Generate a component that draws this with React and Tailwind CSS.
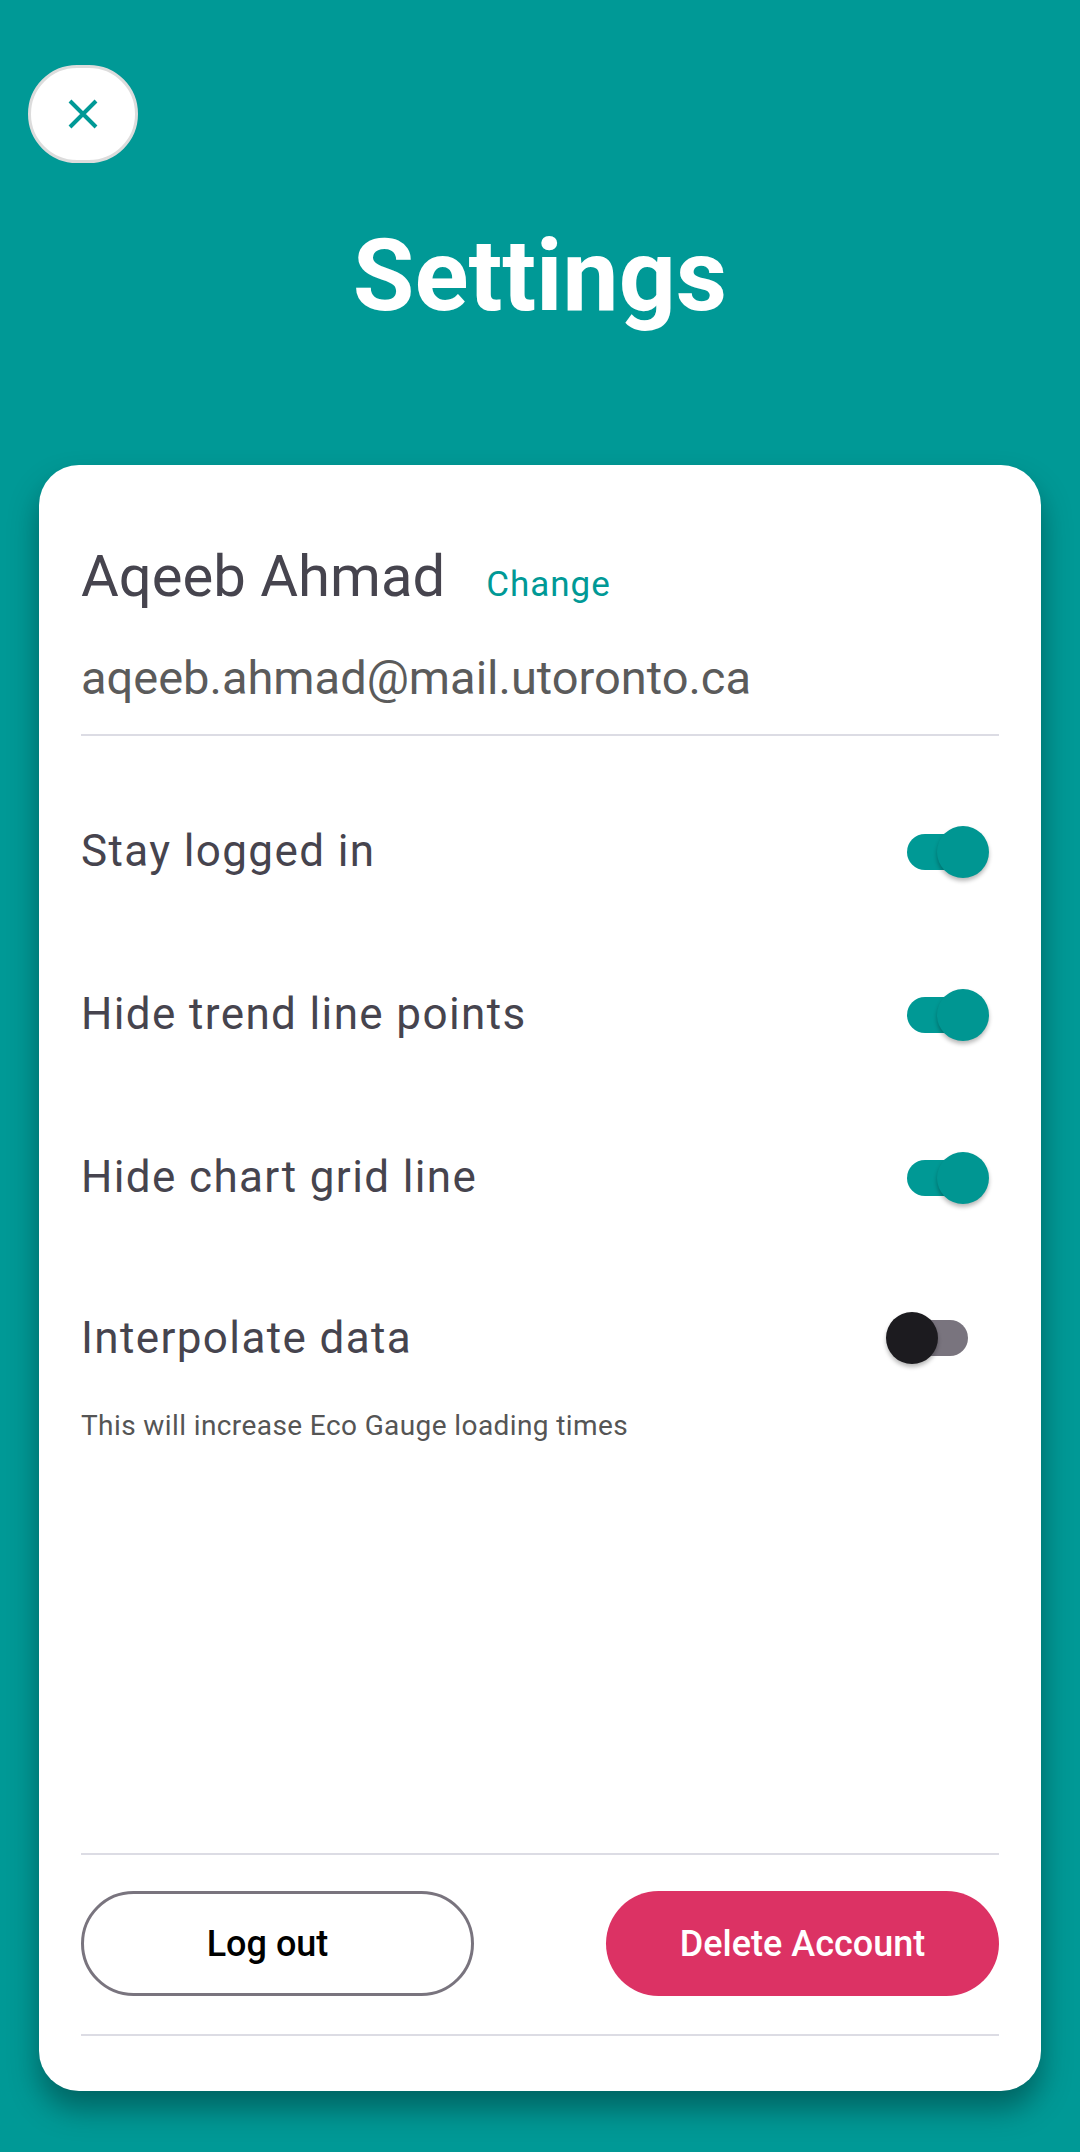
import React, { useState } from 'react';

const Toggle = ({ on, onChange }) => (
  <button
    type="button"
    onClick={onChange}
    className="relative w-[103px] h-[52px] mr-[10px] shrink-0"
  >
    <span
      className={`absolute left-[21px] top-[8px] w-[61px] h-[36px] rounded-full ${
        on ? 'bg-[#009995]' : 'bg-[#79747e]'
      }`}
    />
    <span
      className={`absolute top-0 w-[52px] h-[52px] rounded-full shadow-[0_3px_4px_rgba(0,0,0,0.28)] ${
        on ? 'left-[51px] bg-[#009692]' : 'left-0 bg-[#1c1b1f]'
      }`}
    />
  </button>
);

const SettingRow = ({ label, on, onChange }) => (
  <div className="flex items-center justify-between h-[163px]">
    <span className="text-[44px] leading-none tracking-[0.03125em] text-[#46444e] -mt-[1px]">{label}</span>
    <Toggle on={on} onChange={onChange} />
  </div>
);

const App = () => {
  const [prefs, setPrefs] = useState({
    stayLoggedIn: true,
    hidePoints: true,
    hideGrid: true,
    interpolate: false,
  });

  const flip = (key) => setPrefs((p) => ({ ...p, [key]: !p[key] }));

  return (
    <div
      className="min-h-[2152px] bg-[#009996] pt-[65px]"
      style={{ fontFamily: 'Roboto, "Noto Sans", sans-serif' }}
    >
      {/* close */}
      <button
        type="button"
        className="ml-[28px] w-[110px] h-[98px] rounded-full bg-white border-[3px] border-[#dcdcdc] flex items-center justify-center"
      >
        <svg width="30" height="30" viewBox="0 0 30 30" className="text-[#009996]">
          <path d="M2 2 L28 28 M28 2 L2 28" stroke="currentColor" strokeWidth="4" strokeLinecap="butt" />
        </svg>
      </button>

      <h1 className="mt-[63px] text-center text-white font-bold text-[100px] leading-none">Settings</h1>

      {/* card */}
      <div className="mt-[139px] mx-[39px] h-[1626px] bg-white rounded-[40px] px-[42px] pt-[82px] pb-[55px] flex flex-col shadow-[0_18px_30px_rgba(0,0,0,0.35)]">
        <div className="flex items-baseline">
          <span className="text-[58px] leading-none text-[#46444e]">Aqeeb Ahmad</span>
          <button type="button" className="ml-[41px] text-[35px] leading-none tracking-[1px] text-[#009996]">
            Change
          </button>
        </div>
        <div className="mt-[49px] text-[47px] leading-none text-[#5b5b5b]">aqeeb.ahmad@mail.utoronto.ca</div>
        <div className="mt-[33px] h-[2px] bg-[#dcdce4]" />

        <div className="mt-[34px]">
          <SettingRow label="Stay logged in" on={prefs.stayLoggedIn} onChange={() => flip('stayLoggedIn')} />
          <SettingRow label="Hide trend line points" on={prefs.hidePoints} onChange={() => flip('hidePoints')} />
          <SettingRow label="Hide chart grid line" on={prefs.hideGrid} onChange={() => flip('hideGrid')} />
          <div className="flex items-center justify-between h-[100px] mt-[29px]">
            <span className="text-[44px] leading-none tracking-[0.03125em] text-[#46444e]">Interpolate data</span>
            <Toggle on={prefs.interpolate} onChange={() => flip('interpolate')} />
          </div>
          <p className="mt-[24px] text-[28px] leading-none tracking-[0.4px] text-[#555555]">
            This will increase Eco Gauge loading times
          </p>
        </div>

        {/* footer */}
        <div className="mt-auto">
          <div className="h-[2px] bg-[#dcdce4]" />
          <div className="mt-[36px] flex justify-between">
            <button
              type="button"
              className="w-[393px] h-[105px] pr-[20px] rounded-full border-[3px] border-[#79747e] text-black text-[36px] font-medium"
            >
              Log out
            </button>
            <button
              type="button"
              className="w-[393px] h-[105px] rounded-full bg-[#dc3264] text-white text-[36px] font-medium"
            >
              Delete Account
            </button>
          </div>
          <div className="mt-[38px] h-[2px] bg-[#dcdce4]" />
        </div>
      </div>
    </div>
  );
};

export default App;
